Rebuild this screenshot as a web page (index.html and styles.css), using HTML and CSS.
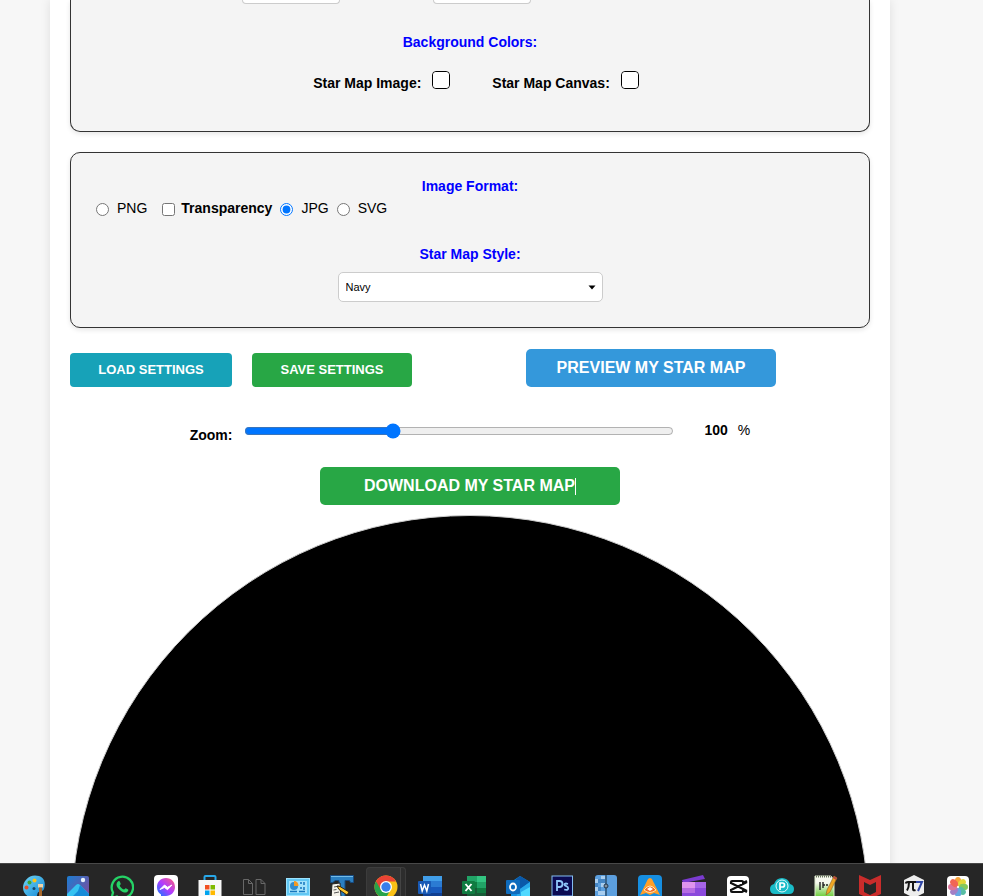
FILE: index.html
```html
<!DOCTYPE html>
<html lang="en">
<head>
<meta charset="utf-8">
<title>Star Map</title>
<link rel="stylesheet" href="styles.css">
</head>
<body>
<main class="viewport">
  <form class="page">
    <section class="card card-colors">
      <div class="stub-row">
        <input class="stub" type="text" aria-label="First value">
        <input class="stub" type="text" aria-label="Second value">
      </div>
      <h2 class="title">Background Colors:</h2>
      <div class="swatches">
        <div class="swatch-field"><label for="c1">Star Map Image:</label><input class="swatch" id="c1" type="color" value="#ffffff"></div>
        <div class="swatch-field"><label for="c2">Star Map Canvas:</label><input class="swatch" id="c2" type="color" value="#ffffff"></div>
      </div>
    </section>

    <section class="card card-format">
      <h2 class="title">Image Format:</h2>
      <div class="formats">
        <input type="radio" name="fmt" id="png"><label class="png" for="png">PNG</label>
        <input type="checkbox" id="tr"><label class="strong" for="tr">Transparency</label>
        <input type="radio" name="fmt" id="jpg" checked><label for="jpg">JPG</label>
        <input type="radio" name="fmt" id="svg"><label for="svg">SVG</label>
      </div>
      <h2 class="title"><label for="style">Star Map Style:</label></h2>
      <div class="select-wrap">
        <select id="style"><option>Navy</option></select>
        <svg class="arrow" viewBox="0 0 8 5" aria-hidden="true"><path d="M.5 .5h7L4 4.500z"/></svg>
      </div>
    </section>

    <div class="actions">
      <button type="button" class="btn load">LOAD SETTINGS</button>
      <button type="button" class="btn save">SAVE SETTINGS</button>
      <button type="button" class="btn big preview">PREVIEW MY STAR MAP</button>
    </div>

    <div class="zoom">
      <label for="zoom">Zoom:</label>
      <input id="zoom" type="range" min="0" max="100" value="34">
      <output for="zoom">100</output><span>%</span>
    </div>

    <button type="button" class="btn big download">DOWNLOAD MY STAR MAP<span class="caret"></span></button>
    <div class="map"></div>
  </form>
</main>

<nav class="taskbar" aria-label="Taskbar">
  <button class="app" aria-label="Paint"><svg viewBox="0 0 24 24"><defs><linearGradient id="g1" x2="1" y2="1"><stop stop-color="#6fd6f5"/><stop offset="1" stop-color="#1184d4"/></linearGradient></defs><path d="M13 .5C20 .5 24 5 22.500 12c-.5 5-4 4-6 5s-.5 6-4 6C5 23 1 18 1 12.500S6 .5 13 .5z" fill="url(#g1)"/><circle cx="12.500" cy="5.500" r="2" fill="#fdc414"/><circle cx="7.500" cy="7.500" r="2" fill="#3fa535"/><circle cx="4.500" cy="12.500" r="2" fill="#e5502b"/><circle cx="12" cy="13.500" r="1.500" fill="#15486d"/><path d="M16 9h5v3.500h-5z" fill="#f0d4a8"/><path d="M17 12.500h3V24h-3z" fill="#a8672a"/></svg></button>
  <button class="app" aria-label="Photos"><svg viewBox="0 0 24 24"><defs><linearGradient id="g2" x2="1" y2=".8"><stop stop-color="#1b7dd2"/><stop offset="1" stop-color="#7b4d9e"/></linearGradient></defs><rect x="1" y="1" width="22" height="23" rx="2" fill="url(#g2)"/><circle cx="17" cy="5" r="2.200" fill="#e8f1fb"/><path d="M1 19 10 10q2-2 4 0L23 19v5H1z" fill="#35c2f1"/><path d="m7 21 5-5 2-6 9 9v5H5z" fill="#168bd8"/></svg></button>
  <button class="app" aria-label="WhatsApp"><svg viewBox="0 0 24 24" fill="none"><path d="M1.500 23 3 17.500A10.700 10.700 0 1 1 7 21.600z" stroke="#25d366" stroke-width="2.300"/><path d="M8 6.500c1-.8 1.700-.4 2 .5l.7 1.800c.2.600-.9 1.500-1 2 1 2 2.300 3 4.300 3.800.6-.2 1.200-1.600 1.800-1.400l2.300 1.200c.7.400-.2 2-1 2.500-1.500 1-3.600.6-6-1-2.500-1.700-4.500-4.200-4.600-6 0-1.600.7-2.800 1.500-3.400z" fill="#25d366"/></svg></button>
  <button class="app" aria-label="Messenger"><svg viewBox="0 0 24 24"><defs><linearGradient id="g3" x1="1" x2=".1" y2="1"><stop stop-color="#ff5f75"/><stop offset=".5" stop-color="#b13bff"/><stop offset="1" stop-color="#0a7cff"/></linearGradient></defs><rect width="24" height="25" rx="4" fill="#fff"/><path d="M12 3c5.500 0 9 4 9 9s-4 9-9 9l-5 2v-3.500C4 18 3 15 3 12c0-5 3.500-9 9-9z" fill="url(#g3)"/><path d="M6 14.500 10.500 10l3 2.300 4.500-2.300-4.500 4.700-3-2.300z" fill="#fff" stroke="#fff"/></svg></button>
  <button class="app" aria-label="Store"><svg viewBox="0 0 24 24"><path d="M6.500 6V2q0-1 1-1h9q1 0 1 1v4" fill="none" stroke="#28a8ea" stroke-width="2"/><path d="M.5 5h23v17q0 2-2 2h-19q-2 0-2-2z" fill="#f8f8f8"/><path d="M7 10h4.500v4.500H7z" fill="#f25022"/><path d="M12.500 10H17v4.500h-4.500z" fill="#7fba00"/><path d="M7 15.500h4.500V20H7z" fill="#00a4ef"/><path d="M12.500 15.500H17V20h-4.500z" fill="#ffb900"/></svg></button>
  <button class="app" aria-label="Documents"><svg viewBox="0 0 24 24" fill="none" stroke="#686868"><path d="M1.500 4.500h5l4 4v11h-9zM6.500 4.500v4h4M14 4.500h5l4 4v11h-9zM19 4.500v4h4"/></svg></button>
  <button class="app" aria-label="Control Panel"><svg viewBox="0 0 24 24"><rect x=".5" y="3.500" width="23" height="17" fill="#62c7f3" stroke="#9be3ff"/><rect x="3" y="6" width="18" height="12" fill="#a5e3fb"/><circle cx="8" cy="11" r="4" fill="#318dcf"/><path d="M8 11V6a4.500 4.500 0 0 1 4.500 5z" fill="#f29a23"/><path d="M14 8h2M14 13h2M4 16.500h7M18 7v3M18 12v3M13 16.500h6" stroke="#1676bd" stroke-width="1.500"/></svg></button>
  <button class="app" aria-label="Text Editor"><svg viewBox="0 0 24 24"><path d="M.5 .5h23v7h-3l-1-2H15V24H9V5.500H5l-2 2H.5z" fill="#2b7fc0" stroke="#174a80"/><path d="M1 1.500h22" stroke="#72bce9"/><path d="m2 9 8-1 1 14-10 2z" fill="#f4f2ea" stroke="#222"/><path d="m4 12 5-1M3.500 15l3-.5M4 18l5-1" stroke="#555"/><path d="m7 11 3 .5 9 5.500-2 3-8-5.500z" fill="#ffc52a" stroke="#30240f"/></svg></button>
  <button class="app active" aria-label="Chrome"><svg viewBox="0 0 24 24"><circle cx="12" cy="12" r="11.500" fill="#fbc116"/><path d="M12 12 2 6.300A11.500 11.500 0 0 0 11.500 23.500l5-8.800z" fill="#28a34a"/><path d="M2 6.300A11.500 11.500 0 0 1 22 6.500H12L7 15z" fill="#ea4335"/><circle cx="12" cy="12" r="6" fill="#fff"/><circle cx="12" cy="12" r="4.700" fill="#397ee9"/></svg></button>
  <button class="app" aria-label="Word"><svg viewBox="0 0 24 24"><path d="M5 1h19v6H5z" fill="#419ee9"/><path d="M5 6h19v6H5z" fill="#2b7bd3"/><path d="M5 12h19v6H5z" fill="#185abd"/><path d="M5 18h19v6H5z" fill="#103f91"/><rect y="6" width="13" height="13" rx="1" fill="#1859b5"/><path d="m2.500 9 1.700 7 2.300-6 2.300 6 1.700-7" fill="none" stroke="#fff" stroke-width="1.500"/></svg></button>
  <button class="app" aria-label="Excel"><svg viewBox="0 0 24 24"><path d="M5 1h19v23H5z" fill="#21a366"/><path d="M15 1h9v6h-9z" fill="#33c481"/><path d="M5 7h10v6H5z" fill="#107c41"/><path d="M5 13h19v11H5z" fill="#185c37"/><path d="M15 13h9v5h-9z" fill="#107c41"/><rect y="6" width="13" height="13" rx="1" fill="#107c41"/><path d="m3.500 9 6 7m0-7-6 7" stroke="#fff" stroke-width="1.900"/></svg></button>
  <button class="app" aria-label="Outlook"><svg viewBox="0 0 24 24"><path d="M5 7 14 1l10 6v17H5z" fill="#1490df"/><path d="M9 5 14 1l10 6-10 7z" fill="#0a58a9"/><path d="m14 14 10-7v17H9z" fill="#28a8ea"/><path d="m15 17 9-5v12h-9z" fill="#50d9ff"/><rect y="5" width="14" height="14" rx="1" fill="#0f6cbd"/><ellipse cx="7" cy="12" rx="3" ry="3.500" fill="none" stroke="#fff" stroke-width="1.800"/></svg></button>
  <button class="app" aria-label="Photoshop"><svg viewBox="0 0 24 24"><rect x="2" y="1" width="20.500" height="20" fill="#0b0b54" stroke="#83bdf1"/><path d="M7 16V6h2.500q3 0 3 3t-3 3H7M18 9q-3.500-1.200-3.500.6 0 1 1.700 1.500 2 .6 2 2.100 0 2.600-4 1.300" fill="none" stroke="#8fc7fb" stroke-width="1.800"/></svg></button>
  <button class="app" aria-label="Archive"><svg viewBox="0 0 24 24"><rect x="1" width="22" height="25" rx="3" fill="#5c9fde"/><path d="M1 4h3v4H1zM7 1h4v3H7zM4 4h3v4H4zM7 8h4v4H7zM1 12h3v4H1zM4 16h3v4H4zM7 16h4v4H7z" fill="#a8cdee"/><path d="M4 4h3v4H4zM1 8h3v4H1zM4 12h3v4H4zM7 4h4v4H7z" fill="#4586c4"/><path d="M12 0v24" stroke="#23435f" stroke-width="1.300"/><circle cx="12" cy="11" r="2" fill="#8090a0" stroke="#23384e"/></svg></button>
  <button class="app" aria-label="Maps"><svg viewBox="0 0 24 24"><rect width="24" height="25" rx="4" fill="#168ee0"/><path d="M12 3c2 0 3 3 4 5l6 12-6-2-4 2-4-2-6 2L8 8c1-2 2-5 4-5z" fill="#ff9f27"/><path d="M6 15q6-8 12 0-6 5-12 0z" fill="#ed6d28" stroke="#ffe1ad"/><path d="m9 14 3-2 3 2-3 2z" fill="#fff"/></svg></button>
  <button class="app" aria-label="Clipchamp"><svg viewBox="0 0 24 24"><path d="m0 5 21-5 2 4L1 8z" fill="#7b3bd0"/><path d="M0 7h24v17H0z" fill="#8b49dc"/><path d="M0 7h13v6H0z" fill="#df94ed"/><path d="M13 7h11v6H13z" fill="#a665e7"/><path d="M0 13h13v5H0z" fill="#b66be2"/></svg></button>
  <button class="app" aria-label="CapCut"><svg viewBox="0 0 24 24"><rect x="1" y="1" width="22" height="23" rx="4" fill="#fff"/><path d="M5 9V7q0-1 1-1h10q1 0 1 1v1l4-2M5 14v2q0 1 1 1h10q1 0 1-1v-1l4 2M5 8l16 8M5 15l16-8" fill="none" stroke="#111" stroke-width="2.100"/></svg></button>
  <button class="app" aria-label="Cloud Drive"><svg viewBox="0 0 24 24"><path d="M5 19q-5 0-5-5 0-4 4-5 2-6 8-6t8 6q4 1 4 5 0 5-5 5z" fill="#1abcc8"/><circle cx="12" cy="11" r="6" fill="none" stroke="#e5fbfc"/><path d="M10 15V8h2.500q2 0 2 2t-2 2H10" fill="none" stroke="#fff" stroke-width="1.700"/></svg></button>
  <button class="app" aria-label="Notepad++"><svg viewBox="0 0 24 24"><defs><linearGradient id="g4" x2="0" y2="1"><stop offset=".3" stop-color="#f6f8ee"/><stop offset="1" stop-color="#54c61c"/></linearGradient></defs><path d="M1 1h16l3 4v19H1z" fill="url(#g4)" stroke="#dce8cc"/><path d="M2 1.500h16" stroke="#66705d" stroke-width="2" stroke-dasharray="1 1"/><path d="M6 7v8M9 10h2M12 10h2M9 7v6" stroke="#222" stroke-width="1.400"/><path d="m20 1 3 2-7 14-4 3 1-5z" fill="#efa724" stroke="#896022" stroke-width=".6"/><path d="m20 1 3 2-1 2-3-2z" fill="#b54b41"/></svg></button>
  <button class="app" aria-label="McAfee"><svg viewBox="0 0 24 24"><path d="m1 0 11 5 11-5v19l-11 5-11-5zM6 7v10l6 3 6-3V7l-6 3z" fill="#c92c2b" fill-rule="evenodd"/></svg></button>
  <button class="app" aria-label="Pi7"><svg viewBox="0 0 24 24"><path d="m12 0 10 5v13l-10 5-10-5V5z" fill="#ededed"/><path d="M3.500 8.500Q4 7 6 7h8M7 7.500q0 5-2 8M11 7.500V14q0 2 2.500 1" fill="none" stroke="#151515" stroke-width="2"/><path d="M14 7h6l-4 9" fill="none" stroke="#3046a5" stroke-width="2"/></svg></button>
  <button class="app" aria-label="Gallery"><svg viewBox="0 0 24 24"><rect x="1" y="1" width="22" height="23" rx="4" fill="#fff"/><g opacity=".9"><ellipse cx="12" cy="6.500" rx="3.200" ry="4.500" fill="#f89b25"/><ellipse cx="12" cy="6.500" rx="3.200" ry="4.500" fill="#e2d324" transform="rotate(45 12 12)"/><ellipse cx="12" cy="6.500" rx="3.200" ry="4.500" fill="#79c34a" transform="rotate(90 12 12)"/><ellipse cx="12" cy="6.500" rx="3.200" ry="4.500" fill="#47b89a" transform="rotate(135 12 12)"/><ellipse cx="12" cy="6.500" rx="3.200" ry="4.500" fill="#559ee0" transform="rotate(180 12 12)"/><ellipse cx="12" cy="6.500" rx="3.200" ry="4.500" fill="#9872c0" transform="rotate(225 12 12)"/><ellipse cx="12" cy="6.500" rx="3.200" ry="4.500" fill="#d9668f" transform="rotate(270 12 12)"/><ellipse cx="12" cy="6.500" rx="3.200" ry="4.500" fill="#f05543" transform="rotate(315 12 12)"/></g></svg></button>
</nav>
</body>
</html>
```
FILE: styles.css
```css
* { box-sizing: border-box; }

body {
  margin: 0;
  height: 100vh;
  display: flex;
  flex-direction: column;
  overflow: hidden;
  background: #f7f7f7;
  color: #000;
  font: 14px/16px "Liberation Sans", Arial, sans-serif;
}

button, input, select { margin: 0; font-family: inherit; }

.viewport {
  flex: 1;
  min-height: 0;
  overflow: hidden;
  padding: 0 50px;
}

.page {
  max-width: 840px;
  min-height: 100%;
  padding: 0 20px;
  background: #fff;
  box-shadow: 0 0 10px rgba(0, 0, 0, .1);
}

.card {
  background: #f4f4f4;
  border: 1px solid #333;
  border-radius: 10px;
  box-shadow: 0 2px 5px rgba(0, 0, 0, .1);
  padding: 0 24px;
}

.card-colors {
  border-top: 0;
  border-radius: 0 0 10px 10px;
  padding-bottom: 40px;
}

.card-format { margin-top: 20px; padding: 25px 24px; }

.stub-row {
  display: flex;
  gap: 93px;
  padding-left: 147px;
  margin-bottom: 30px;
}

.stub {
  width: 98px;
  height: 4px;
  padding: 0;
  background: #fff;
  border: 1px solid #ccc;
  border-top: 0;
  border-radius: 0 0 5px 5px;
}

.title {
  margin: 0;
  font-size: 14px;
  line-height: 16px;
  text-align: center;
  color: #00f;
}

.swatches {
  display: flex;
  justify-content: center;
  gap: 42px;
  margin-top: 20px;
  padding-left: 12px;
}

.swatch-field { display: flex; gap: 11px; font-weight: bold; }
.swatch-field label { padding-top: 5px; }

.swatch {
  appearance: none;
  width: 18px;
  height: 18px;
  margin-top: 1px;
  padding: 0;
  background: #fff;
  border: 1px solid #000;
  border-radius: 4px;
}

.swatch::-webkit-color-swatch-wrapper { padding: 0; }
.swatch::-webkit-color-swatch { border: 0; border-radius: 3px; }

.formats {
  display: flex;
  align-items: center;
  margin: 6px 0 30px 1px;
}

.formats input { width: 13px; height: 13px; margin-top: 2px; accent-color: #0075ff; }
.formats label { margin: 0 8px; }
.formats .png { margin-right: 15px; }
.formats .strong { margin-left: 6px; font-weight: bold; }

.select-wrap {
  position: relative;
  width: 265px;
  margin: 10px auto 0;
}

.select-wrap select {
  appearance: none;
  display: block;
  width: 100%;
  height: 30px;
  padding: 0 7px;
  background: #fff;
  border: 1px solid #ccc;
  border-radius: 5px;
  color: #000;
  font-size: 11px;
}

.arrow {
  position: absolute;
  right: 7px;
  top: 13px;
  width: 8px;
  height: 5px;
}

.actions {
  display: flex;
  align-items: flex-end;
  gap: 20px;
  margin-top: 21px;
}

.btn {
  height: 34px;
  padding: 0 0 2px;
  border: 0;
  border-radius: 4px;
  color: #fff;
  font-size: 13px;
  font-weight: bold;
}

.load { width: 162px; background: #17a2b8; }
.save { width: 160px; background: #28a745; }
.big { height: 38px; padding: 0; border-radius: 5px; font-size: 16px; }
.preview { width: 250px; margin-left: 94px; background: #3498db; }

.zoom {
  display: flex;
  align-items: flex-start;
  justify-content: center;
  margin-top: 35px;
}

.zoom label { font-weight: bold; padding-top: 5px; }
.zoom input { width: 430px; height: 16px; margin: 1px 30px 0 12px; accent-color: #0075ff; }
.zoom output { font-weight: bold; margin-right: 10px; }

.download {
  display: flex;
  align-items: center;
  justify-content: center;
  width: 300px;
  margin: 24px auto 10px;
  background: #28a745;
}

.caret { width: 1px; height: 17px; background: #fff; }

.map {
  aspect-ratio: 1;
  margin: 0 1px;
  background: #000;
  border: 1px solid #ccc;
  border-radius: 50%;
}

.taskbar {
  position: relative;
  display: flex;
  flex: none;
  height: 33px;
  padding: 3px 0 0 12px;
  overflow: hidden;
  background: #262626;
  border-top: 1px solid #484848;
}

.app {
  flex: none;
  width: 40px;
  height: 40px;
  margin: 0 2px;
  padding: 8px;
  background: none;
  border: 0;
  border-radius: 4px;
}

.app svg { display: block; width: 24px; height: 24px; }

.app.active {
  background: linear-gradient(90deg, #333 34px, #444 34px, #444 35px, #2d2d2d 35px);
  box-shadow: inset 0 0 0 1px #3c3c3c;
}
```
